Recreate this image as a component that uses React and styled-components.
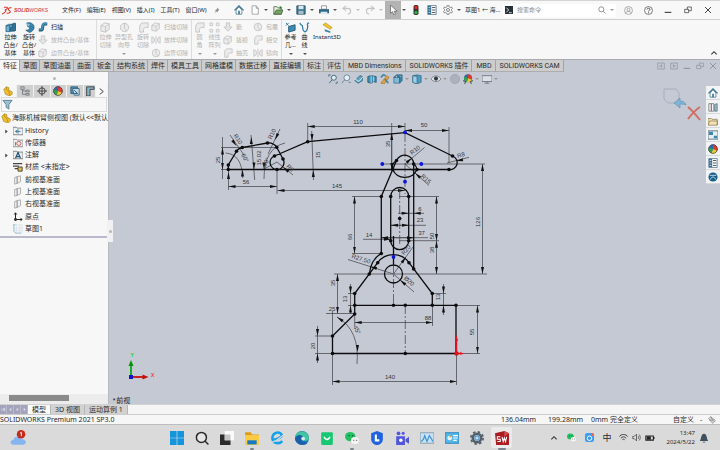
import React, { useState } from "react";
import styled, { createGlobalStyle, css } from "styled-components";

const GlobalStyle = createGlobalStyle`
  * {
    box-sizing: border-box;
  }
  body {
    margin: 0;
    font-family: "Noto Sans", "Noto Sans CJK SC", sans-serif;
    font-size: 7px;
    line-height: 10px;
    color: #2b2b2b;
    background-color: #f6f6f6;
  }
  button, input {
    font: inherit;
    color: inherit;
    border: none;
    margin: 0;
    padding: 0;
    background: none;
  }
  svg {
    display: block;
    flex: none;
  }
`;

const Page = styled.div`
  min-height: 100vh;
  display: flex;
  flex-direction: column;
`;

const TitleBar = styled.header`
  height: 20px;
  padding-right: 2px;
  display: flex;
  align-items: center;
  border-top: 1px solid #d4d4d4;
  border-bottom: 1px solid #cfcfcf;
  background-color: #f8f8f8;
`;

const Logo = styled.div`
  width: 61px;
  padding-left: 2px;
  display: flex;
  align-items: center;
  gap: 1px;
  color: #d8372d;
  font-family: "Liberation Sans", sans-serif;
  font-size: 5px;
  font-style: italic;
  & > b {
    font-weight: 900;
  }
`;

const Menus = styled.nav`
  width: 170px;
  display: flex;
  align-items: center;
  gap: 4px;
  font-size: 6px;
  white-space: nowrap;
  color: #1d1d1d;
`;

const MenuButton = styled.button`
  padding: 0 1px;
`;

const QuickTools = styled.div`
  flex: 1;
  display: flex;
  align-items: center;
`;

const QuickButton = styled.button`
  width: ${(props) => (props.$caret ? 23 : 16)}px;
  height: 18px;
  display: flex;
  align-items: center;
  gap: 1px;
  opacity: ${(props) => (props.disabled ? 0.35 : 1)};
`;

const QuickFace = styled.span`
  width: 16px;
  height: 18px;
  display: flex;
  align-items: center;
  justify-content: center;
  background-color: ${(props) => (props.$active ? "#b3b3b3" : "transparent")};
`;

const Caret = styled.span`
  width: 0;
  height: 0;
  border-left: 2px solid transparent;
  border-right: 2px solid transparent;
  border-top: 2px solid ${(props) => (props.$light ? "#999" : "#555")};
`;

const DocName = styled.div`
  width: 38px;
  font-size: 6px;
  overflow: hidden;
  white-space: nowrap;
`;

const SearchBox = styled.label`
  width: 113px;
  height: 13px;
  padding: 0 2px;
  display: flex;
  align-items: center;
  gap: 4px;
  background-color: #fff;
`;

const SearchInput = styled.input`
  flex: 1;
  min-width: 0;
  font-size: 6px;
  outline: none;
  &::placeholder {
    color: #858585;
    opacity: 1;
  }
`;

const WindowButtons = styled.div`
  display: flex;
  padding-left: 2px;
`;

const WindowButton = styled.button`
  width: 20px;
  height: 18px;
  display: flex;
  align-items: center;
  justify-content: center;
`;

const Ribbon = styled.section`
  height: 39px;
  display: flex;
  background-color: #f7f7f7;
`;

const RibbonGroup = styled.div`
  height: 39px;
  padding: 0 1px;
  display: flex;
  border-right: 1px solid ${(props) => (props.$last ? "transparent" : "#dcdcdc")};
`;

const BigTool = styled.button`
  width: ${(props) => props.$width}px;
  padding-top: 2px;
  display: flex;
  flex-direction: column;
  align-items: center;
  font-size: 6px;
  line-height: 8px;
  white-space: nowrap;
  color: ${(props) => (props.disabled ? "#b4b4b4" : "#222")};
  & > svg {
    opacity: ${(props) => (props.disabled ? 0.4 : 1)};
  }
  & > ${Caret} {
    margin-top: 4px;
  }
`;

const SmallTools = styled.div`
  width: ${(props) => props.$width}px;
  display: flex;
  flex-direction: column;
`;

const SmallTool = styled.button`
  height: 13px;
  display: flex;
  align-items: center;
  gap: 3px;
  font-size: 6px;
  white-space: nowrap;
  color: ${(props) => (props.disabled ? "#b4b4b4" : "#222")};
  & > svg {
    opacity: ${(props) => (props.disabled ? 0.4 : 1)};
  }
`;

const RibbonEnd = styled.div`
  flex: 1;
  display: flex;
  justify-content: flex-end;
  align-items: flex-end;
  padding: 0 2px 2px 0;
`;

const TabRow = styled.div`
  height: 13px;
  padding-right: 1px;
  display: flex;
  border-top: 1px solid #a9abb0;
  background-color: #c5c9d4;
`;

const CommandTab = styled.button`
  height: 12px;
  padding: ${(props) => (props.$wide ? "0 3px 0 4px" : "0 2px 0 3px")};
  font-family: Roboto, "Noto Sans CJK SC", sans-serif;
  line-height: 12px;
  white-space: nowrap;
  border-right: 1px solid #a4a4a4;
  border-bottom: 1px solid ${(props) => (props.$active ? "#f7f7f7" : "#adadad")};
  background-color: ${(props) => (props.$active ? "#f7f7f7" : "#cdcdcd")};
`;

const DocButtons = styled.div`
  margin-left: auto;
  display: flex;
  align-items: center;
  color: #8b8f99;
`;

const DocButton = styled.button`
  width: 13px;
  display: flex;
  justify-content: center;
`;

const Body = styled.main`
  flex: 1;
  display: flex;
`;

const SidePanel = styled.aside`
  width: 109px;
  display: flex;
  flex-direction: column;
  position: relative;
  z-index: 1;
  border-right: 1px solid #b9bac0;
  background-color: #f7f7f7;
`;

const Grip = styled.div`
  height: 13px;
  display: flex;
  align-items: center;
  justify-content: center;
`;

const GripDot = styled.span`
  width: 3px;
  height: 3px;
  border-radius: 50%;
  background-color: #b8b8b8;
`;

const PanelTabs = styled.div`
  height: 12px;
  display: flex;
`;

const PanelTab = styled.button`
  width: ${(props) => (props.$narrow ? 12 : 17)}px;
  display: flex;
  align-items: center;
  justify-content: center;
  overflow: hidden;
  border-right: 1px solid #f1f1f1;
  background-color: ${(props) => (props.$active ? "#f7f7f7" : "#cfcfcf")};
`;

const FilterRow = styled.label`
  height: 15px;
  margin: 0 1px;
  display: flex;
  align-items: center;
  gap: 2px;
  border: 1px solid #dadada;
`;

const FilterInput = styled.input`
  flex: 1;
  min-width: 0;
  outline: none;
`;

const Tree = styled.div`
  padding-bottom: 1px;
  display: flex;
  flex-direction: column;
  gap: 1px;
  border-bottom: 2px solid #b9b8cd;
`;

const TreeRoot = styled.div`
  height: 12px;
  padding-left: 1px;
  display: flex;
  align-items: center;
  gap: 1px;
  white-space: nowrap;
`;

const TreeList = styled.ul`
  margin: 0;
  padding: 0;
  list-style: none;
`;

const TreeItem = styled.li`
  height: 12px;
  display: flex;
  align-items: center;
  white-space: nowrap;
  & > svg {
    margin-right: 2px;
  }
`;

const Expander = styled.button`
  width: 13px;
  height: 12px;
  display: flex;
  align-items: center;
  justify-content: center;
`;

const PanelFill = styled.div`
  flex: 1;
`;

const ScrollTrack = styled.div`
  height: 10px;
  padding: 1px 9px;
  background-color: #ececec;
`;

const ScrollThumb = styled.div`
  width: 60px;
  height: 6px;
  background-color: #8a8a8a;
`;

/* tab that sticks out of the panel edge */
const CollapseHandle = styled.button`
  position: absolute;
  top: 148px;
  left: 107px;
  width: 6px;
  height: 22px;
  display: flex;
  align-items: center;
  justify-content: center;
  background-color: #f1f1f3;
`;

const Viewport = styled.div`
  flex: 1;
  position: relative;
  background-color: #c5c9d4;
`;

const Drawing = styled.svg`
  width: 100%;
  height: 100%;
`;

const HudBar = styled.div`
  position: absolute;
  top: 1px;
  left: 0;
  right: 0;
  display: flex;
  align-items: center;
  justify-content: center;
`;

const HudButton = styled.button`
  width: ${(props) => (props.$caret ? 19 : 13)}px;
  height: 12px;
  display: flex;
  align-items: center;
  gap: 2px;
`;

const ConfirmCorner = styled.button`
  position: absolute;
  top: 13px;
  right: 18px;
`;

const TaskPane = styled.div`
  position: absolute;
  top: 14px;
  right: 0;
  width: 14px;
  display: flex;
  flex-direction: column;
  background-color: #f2f3f5;
`;

const PaneButton = styled.button`
  height: 14px;
  display: flex;
  align-items: center;
  justify-content: center;
  border-bottom: 1px solid #d7d8dc;
`;

const ModelTabs = styled.div`
  height: 10px;
  display: flex;
  border-top: 1px solid #d2d2d2;
  background-color: #f5f5f5;
`;

const Arrows = styled.div`
  width: 28px;
  display: flex;
  background-color: #a3a3bb;
`;

const ArrowButton = styled.button`
  width: 7px;
  display: flex;
  align-items: center;
  justify-content: center;
  border-right: 1px solid #b7b7c9;
`;

const ModelTab = styled.button`
  padding: 0 4px;
  line-height: 9px;
  white-space: nowrap;
  border-right: 1px solid #b5b5b5;
  background-color: ${(props) => (props.$active ? "#fafafa" : "#d2d2d2")};
`;

const StatusBar = styled.footer`
  height: 10px;
  display: flex;
  border-top: 1px solid #cccccc;
  background-color: #f6f6f6;
  white-space: nowrap;
`;

const Product = styled.span`
  flex: 1;
`;

const StatusCell = styled.span`
  width: ${(props) => props.$width}px;
  display: flex;
  align-items: center;
  gap: 6px;
`;

const Taskbar = styled.footer`
  height: 26px;
  display: grid;
  grid-template-columns: 4fr 350px 5fr;
  align-items: center;
  border-top: 1px solid #bdbdbd;
  background-color: #dadada;
`;

const Weather = styled.button`
  width: 36px;
  height: 24px;
  display: flex;
  align-items: center;
  justify-content: center;
`;

const Apps = styled.div`
  display: flex;
`;

const AppButton = styled.button`
  width: 25px;
  height: 24px;
  position: relative;
  display: flex;
  align-items: center;
  justify-content: center;
  ${(props) =>
    props.$open &&
    css`
      &::after {
        content: "";
        position: absolute;
        bottom: 0;
        left: 50%;
        width: ${props.$current ? 8 : 4}px;
        height: 2px;
        border-radius: 1px;
        background-color: #7c848e;
        transform: translateX(-50%);
      }
    `}
`;

const AppFace = styled.span`
  width: 21px;
  height: 21px;
  display: flex;
  align-items: center;
  justify-content: center;
  border-radius: 2px;
  background-color: ${(props) => (props.$current ? "#ebebeb" : "transparent")};
`;

const Tray = styled.div`
  padding-right: 8px;
  display: flex;
  align-items: center;
  justify-content: flex-end;
`;

const TrayButton = styled.button`
  width: ${(props) => props.$width}px;
  display: flex;
  align-items: center;
  justify-content: center;
  font-size: 9px;
`;

const Clock = styled.div`
  width: 38px;
  text-align: right;
  font-size: 6px;
  line-height: 9px;
`;

const blue = "#3683ad";

const glyphs = {
  ds: (
    <g fill="none" stroke="#d8372d" strokeWidth="1.1">
      <path d="M2 2.500h3.500c1.500 1-1 2.500-2.500 3 2 0 2 2-3 4.500M10.500 3c-4-.5-4.500 2-2.500 3s1 3.500-3 3" />
    </g>
  ),
  pin: (
    <path d="M7 1l4 4-1.500.5-1.500 2 0 2-2-2L2 11l3-4-2-2h2l2-2z" fill="#8a8f95" />
  ),
  home: (
    <g>
      <path d="M2.500 6v5h7V6L6 2.500z" fill="#fff" stroke="#4b7c94" />
      <path d="M.5 6.500L6 1l5.500 5.500" fill="none" stroke="#3c7794" strokeWidth="1.500" />
      <path d="M5 7h2v4H5z" fill="#3c7794" />
    </g>
  ),
  doc: <path d="M2.500 1h5l2.500 3v7h-7.500zM7.500 1v3H10" fill="#fff" stroke="#999" />,
  open: (
    <g>
      <path d="M1 2h4l1 1.500h4V11H1z" fill="#e6edda" stroke="#5b6d55" />
      <path d="M1 11l3-5h8l-2 5z" fill="#75a36a" stroke="#49663f" />
      <path d="M8 1l3 2-3 2z" fill="#2b8b30" />
    </g>
  ),
  save: (
    <g>
      <path d="M1 1h10v10H1z" fill="#3b7898" stroke="#2a4a5e" />
      <path d="M3 1h6v4H3z" fill="#d8e6ee" />
      <path d="M3 7h6v4H3z" fill="#a9bcc8" />
    </g>
  ),
  print: (
    <g>
      <path d="M3 1h6v4H3z" fill="#fff" stroke="#888" />
      <path d="M0 5h12v5H0z" fill="#2e6484" />
      <path d="M2 8h8v3H2z" fill="#dce9f0" />
    </g>
  ),
  undo: <path d="M5 1L1 4l4 3M1 4h6c4 0 5 6 0 7" fill="none" stroke="#666" strokeWidth="1.300" />,
  redo: <path d="M7 1l4 3-4 3M11 4H5C1 4 0 10 5 11" fill="none" stroke="#666" strokeWidth="1.300" />,
  cursor: <path d="M3 0v10l2.500-2L7 12l2-1-1.500-3.500H11z" fill="#fafafa" stroke="#555" strokeWidth=".8" />,
  traffic: (
    <g>
      <rect x="3" y="0" width="6" height="12" rx="2" fill="#333" />
      <circle cx="6" cy="3" r="2" fill="#e02b20" />
      <circle cx="6" cy="9" r="2" fill="#2fae3c" />
    </g>
  ),
  props: (
    <g>
      <path d="M1 .5h10v11H1z" fill="#f5f8fa" stroke="#5d7d90" />
      <path d="M1 1h4v10H1z" fill="#3c7390" />
      <path d="M2 3h2M2 6h2M2 9h2" stroke="#cfe2ec" />
      <path d="M6 3h4M6 6h4M6 9h4" stroke="#444" />
    </g>
  ),
  gear: (
    <g fill="none" stroke="#6d7278">
      <circle cx="6" cy="6" r="1.800" />
      <path d="M5 .7h2l.4 1.500 1.400.8 1.500-.6 1 1.700L10.200 5.300v1.400l1.100 1.200-1 1.700-1.500-.5-1.400.8-.4 1.400H5l-.4-1.400-1.400-.8-1.500.5-1-1.700 1.100-1.200V5.300L.7 4.100l1-1.700 1.500.6 1.400-.8z" />
    </g>
  ),
  console: (
    <g>
      <path d="M0 0h12v12H0z" fill="#263038" />
      <path d="M2 2.500L5.500 6 2 9.500M6 10h4" fill="none" stroke="#fff" strokeWidth="1.200" />
    </g>
  ),
  search: (
    <g fill="none" stroke="#777" strokeWidth="1.200">
      <circle cx="5" cy="5" r="3.800" />
      <path d="M8 8l3.500 3.500" />
    </g>
  ),
  user: (
    <g fill="none" stroke="#8c8c8c" strokeWidth=".9">
      <circle cx="6" cy="6" r="5.300" />
      <circle cx="6" cy="5" r="2" />
      <path d="M2.500 9.500c1-3 6-3 7 0" />
    </g>
  ),
  help: (
    <g fill="none" stroke="#555" strokeWidth="1">
      <circle cx="6" cy="6" r="5.300" />
      <path d="M4 4.600C4 2.500 8 2.500 8 4.600 8 6 6 5.700 6 7.300M6 8.300v1.400" strokeWidth="1.300" />
    </g>
  ),
  min: <path d="M1 9.500h10" stroke="currentColor" strokeWidth="1.500" />,
  restore: <path d="M1 5h6v5H1zM5 5V1.500h6V7H7" fill="none" stroke="currentColor" />,
  close: <path d="M1.500 1.500l9 9M10.500 1.500l-9 9" stroke="currentColor" strokeWidth="1.300" />,
  paneLeft: <path d="M1 1.500h10v9H1zM7 4L4 6l3 2z" fill="none" stroke="currentColor" />,
  paneRight: <path d="M1 1.500h10v9H1zM5 4l3 2-3 2z" fill="none" stroke="currentColor" />,
  up: <path d="M2 8l4-4 4 4" fill="none" stroke="#333" strokeWidth="1.600" />,
  right: <path d="M3 1l6 5-6 5" fill="none" stroke="#333" strokeWidth="1.600" />,
  branch: <path d="M3 1l6 5-6 5z" fill="#444" />,
  extrude: (
    <g stroke="#1c4f6e" strokeWidth=".7">
      <path d="M1 4l3-1.500h4V9L5 10.500H1z" fill="#6fb1cf" />
      <path d="M1 4h4v6.500M5 4l3-1.500" fill="none" />
      <path d="M6 6h2V2l3-1 1 1v7l-2 1H6z" fill="#2b7399" />
    </g>
  ),
  revolve: (
    <g>
      <path d="M3 1c9-2 11 8 3 10.500L2 9c5 0 5-3.500 2-4z" fill={blue} stroke="#1f4f6c" strokeWidth=".7" />
      <path d="M3 1l4 2-3 2z" fill="#8cc7df" />
    </g>
  ),
  sweep: (
    <g fill="none">
      <path d="M1 9.500h3c3 0 0-7 4-7h3" stroke="#21536f" strokeWidth="3.600" />
      <path d="M1 9h3c3 0 0-7 4-7h3" stroke="#3f93bd" strokeWidth="2" />
    </g>
  ),
  solid: (
    <path d="M1 4l4-3 5 1v6l-4 3-5-1zM1 4l5 1 4-3M6 5v6" fill="#ddd" stroke="#777" strokeWidth="1" />
  ),
  hole: (
    <g fill="#ddd" stroke="#777">
      <circle cx="6" cy="6" r="4.500" />
      <path d="M6 1v6l3 3" fill="none" />
    </g>
  ),
  loft: <path d="M4 1h4v5h3l-5 5-5-5h3z" fill="#ccc" stroke="#777" />,
  fillet: <path d="M2 11V5c0-3 2-4 4-4h5v5H8c-1 0-2 1-2 2v3z" fill="#ddd" stroke="#777" />,
  pattern: <path d="M1 1h3v3H1zM8 1h3v3H8zM1 8h3v3H1zM8 8h3v3H8z" fill="#ddd" stroke="#888" />,
  mirror: <path d="M1 2l3 2v4l-3 2zM11 2L8 4v4l3 2zM6 1v10" fill="#ddd" stroke="#777" />,
  refgeo: (
    <g>
      <path d="M4 5l7-2v6l-7 2z" fill="#3d8bb3" stroke="#235a78" />
      <path d="M1 1l3 3M4 1L1 4" stroke="#2c6d92" />
    </g>
  ),
  curve: <path d="M1 1c1 4 3 1 3 5s3 7 5 2-2-6 2-7" fill="none" stroke="#2b7bab" strokeWidth="1.400" />,
  instant: (
    <g>
      <path d="M1 3l3-2 7 5-2 2z" fill="#f2c52f" stroke="#a98211" strokeWidth=".6" />
      <path d="M3 8l6 2v2L3 10z" fill="#3f7fa6" />
    </g>
  ),
  part: (
    <g stroke="#a37b10" strokeWidth=".7">
      <path d="M1 4l3-3 3 1v3l4 2v3l-3 2-5-2z" fill="#f1bf2d" />
      <path d="M4 1l0 3 3 2M7 6l1 5" fill="none" />
    </g>
  ),
  config: <path d="M1 1h4v3H1zM7 5h4v2H7zM7 9h4v2H7zM3 4v6h4M3 6h4" fill="none" stroke="#6f7479" />,
  target: (
    <g fill="none" stroke="#333">
      <circle cx="6" cy="6" r="3.800" />
      <path d="M6 0v12M0 6h12" />
    </g>
  ),
  ball: (
    <g>
      <circle cx="6" cy="6" r="5.300" fill="#2d66b5" />
      <path d="M6 6V.7A5.300 5.300 0 0 1 11 8z" fill="#dd3a2e" />
      <path d="M6 6l5 2a5.300 5.300 0 0 1-7 3z" fill="#f0c733" />
      <path d="M6 6L4 11A5.300 5.300 0 0 1 1 4z" fill="#37a04a" />
      <circle cx="6" cy="6" r="5.300" fill="none" stroke="#333" strokeWidth=".7" />
    </g>
  ),
  camTree: (
    <g>
      <path d="M1 1h8v8H1z" fill="#4b8db0" stroke="#2a5c78" />
      <path d="M3 3h8v8H5z" fill="#c5d9e4" stroke="#34647e" />
      <path d="M5 5l4 4M5 9h4" stroke="#1b4c68" />
    </g>
  ),
  sheet: <path d="M2 12V1h9v3H6v8z" fill="#83b4cc" stroke="#333" />,
  funnel: <path d="M1 1.500h10L7.500 6v5l-3-2V6z" fill="#9fc0d2" stroke="#567f96" />,
  history: (
    <g>
      <path d="M0 1.500h4l1 1h7v8H0z" fill="#eee" stroke="#777" />
      <path d="M3 6.500h6M6 4v5M5 5L3 6.500 5 8" stroke="#2d7398" fill="none" />
    </g>
  ),
  sensor: (
    <g>
      <path d="M0 1.500h4l1 1h7v8H0z" fill="#eee" stroke="#888" />
      <circle cx="7" cy="6.500" r="2.500" fill="none" stroke="#c05050" />
      <path d="M3 5v4" stroke="#666" />
    </g>
  ),
  note: (
    <g>
      <path d="M0 1.500h4l1 1h7v8H0z" fill="#e8eef2" stroke="#777" />
      <path d="M3 10l3-7 3 7M4 8h4" stroke="#20506d" strokeWidth="1.400" fill="none" />
    </g>
  ),
  material: (
    <g>
      <path d="M0 2h11M0 5h7M2 8h4" stroke="#444" strokeWidth="1.500" />
      <path d="M6 6h5v5H6z" fill="#e3bf49" stroke="#333" />
    </g>
  ),
  plane: <path d="M2 3l3-1v8l-3 1zM5 2l4-1v7l-4 2z" fill="#f3f3f3" stroke="#8e8e8e" strokeWidth=".8" />,
  origin: <path d="M3 1v8h8M1.500 3L3 1l1.500 2M9 7.500L11 9l-2 1.500M2 8h2v2H2z" fill="none" stroke="#222" strokeWidth="1.200" />,
  sketch: (
    <g fill="none" strokeWidth=".8">
      <path d="M4 1v10M8 1v10M1 5h10M1 8h10M3 1h8v10" stroke="#d0dfe7" />
      <path d="M0 1h3M1 1v7c0 2 2 3 4 3h5" stroke="#6ea3bf" />
    </g>
  ),
  zoomFit: (
    <g fill="none" stroke="#4a6c84" strokeWidth="1.200">
      <circle cx="7" cy="4.500" r="3" fill="#e0ecf4" />
      <path d="M5 7l-3.500 4M1 1h2M1 1v2M11 9v2H9" />
    </g>
  ),
  zoomArea: (
    <g fill="none" stroke="#66869a" strokeWidth="1.100">
      <circle cx="7" cy="4.500" r="3.500" fill="#e6f0f6" />
      <path d="M4.500 7L1 11M9 10h3" />
    </g>
  ),
  prev: (
    <g>
      <path d="M1 8l6-6 3 1v5l-5 3z" fill="#64a6c8" stroke="#2f6480" />
      <path d="M1 6l5 3 5-6" fill="none" stroke="#e8f3f8" />
    </g>
  ),
  section: (
    <g>
      <path d="M1 3l4-1 6 1v7l-3-1-3 2-4-1z" fill="#3f8eb4" stroke="#245a78" />
      <path d="M5 2v9M8 3v6" stroke="#cfe5ef" />
    </g>
  ),
  dynamic: (
    <g>
      <path d="M1 11l7-9 3 2-6 8z" fill="#e2a13a" stroke="#93611b" strokeWidth=".6" />
      <path d="M1 4l3-3 3 1M6 6l4 5" fill="none" stroke="#4284a7" strokeWidth="2" />
    </g>
  ),
  orient: (
    <g stroke="#245a78" strokeWidth=".7">
      <path d="M1 4h7v7H1z" fill="#7dbbd6" />
      <path d="M1 4l3-3h7v7l-3 3V4z" fill="#3f86aa" />
      <path d="M3 2h2v3M8 2h2v2" fill="#f2f7fa" />
    </g>
  ),
  cube: (
    <g stroke="#245a78" strokeWidth=".7">
      <path d="M1 2l5-1 5 1v8l-5 2-5-2z" fill="#4e9bc1" />
      <path d="M1 2l5 1v9l-5-2z" fill="#9fd0e4" />
    </g>
  ),
  eye: (
    <g>
      <path d="M0 6c3-5 9-5 12 0-3 4-9 4-12 0z" fill="#e4e9ed" stroke="#777" />
      <circle cx="6" cy="5.500" r="2.500" fill="#2f3b45" />
    </g>
  ),
  sphere: <circle cx="6" cy="6" r="5.500" fill="#acb2bd" stroke="#9da4b0" />,
  scene: (
    <g>
      <circle cx="6" cy="5" r="4.800" fill="#2d66b5" />
      <path d="M6 5V.2A4.800 4.800 0 0 1 10.500 7z" fill="#dd3a2e" />
      <path d="M6 5l4.500 2a4.800 4.800 0 0 1-6 2.500z" fill="#f0c733" />
      <path d="M6 5L4.500 9.500A4.800 4.800 0 0 1 1.500 3z" fill="#37a04a" />
      <path d="M0 8l3 1-1 3M12 8l-3 1 1 3" fill="none" stroke="#333" />
    </g>
  ),
  screen: <path d="M0 2h12v7H0zM3 11h6M6 9v2" fill="#dce0e5" stroke="#66707a" />,
  books: (
    <g>
      <path d="M1 2h3v9H1zM4 2h3v9H4z" fill="#f5f5f5" stroke="#777" />
      <path d="M8 3l3-1v9H8z" fill="#9fb8c8" stroke="#5f7a8a" />
    </g>
  ),
  folder: <path d="M0 3h4l1 1h6v7H0zM0 11l2-5h10l-1 5" fill="#f1e3b7" stroke="#97835a" />,
  palette: (
    <g>
      <path d="M0 1h12v10H0z" fill="#e8eef2" stroke="#526a7a" />
      <path d="M1 2h5v4H1zM7 7h4v3H7z" fill="#3e85aa" />
    </g>
  ),
  forum: (
    <g>
      <circle cx="6" cy="6" r="5.500" fill="#195f8c" />
      <path d="M2 4h8M3 9c1-4 5-4 6 0" stroke="#d8ecf6" fill="none" />
    </g>
  ),
  tag: <path d="M1 4l3-3 7 6-4 4zM4 1l4 7M2 6l6 0" fill="#ddd" stroke="#777" />,
  start: (
    <path d="M0 0h5.700v5.700H0zM6.300 0H12v5.700H6.300zM0 6.300h5.700V12H0zM6.300 6.300H12V12H6.300z" fill="#1295dd" />
  ),
  find: (
    <g fill="none" stroke="#2b2b2b" strokeWidth="1.300">
      <circle cx="5.500" cy="5.500" r="4.300" fill="#e6e6e6" />
      <path d="M8.500 8.500l3 3" />
    </g>
  ),
  desk: (
    <g>
      <path d="M4 0h8v8H4z" fill="#fbfbfb" />
      <path d="M0 3h4v5h5v4H0z" fill="#2b2b2b" />
      <path d="M4 3h5v5H4z" fill="#c4c4c4" />
    </g>
  ),
  explorer: (
    <g>
      <path d="M0 1h5l1 2h6v9H0z" fill="#dc9d17" />
      <path d="M0 3.500h12V12H0z" fill="#fccb46" />
      <path d="M2 8h8v3.500H2z" fill="#1478c5" />
    </g>
  ),
  ebrowser: (
    <g fill="none">
      <path d="M10.500 4C8.500 0 2.500.5 2 6c0 5 6.500 5.500 8.500 2.500" stroke="#14a3ea" strokeWidth="2.200" />
      <path d="M2 7.500c3 0 6-1 8.500-3.500" stroke="#14a3ea" strokeWidth="2.200" />
      <path d="M0 9.500C5 10 8 6 12 3" stroke="#dadada" strokeWidth="1" />
    </g>
  ),
  edge: (
    <g>
      <circle cx="6" cy="6" r="6" fill="#1a74bd" />
      <path d="M0 6C0-1 11-2 12 6c0 3-4 3-5 2 1-3-2-5-7-2z" fill="#3ec7a0" />
      <path d="M0 6c2-4 7-3 7 0-3 1-2 4 4 4-4 4-11 1-11-4z" fill="#1b5fa9" />
      <circle cx="7" cy="6.500" r="1.600" fill="#dcecf4" />
    </g>
  ),
  store: (
    <g>
      <rect x="1" y="1" width="10" height="11" rx="1" fill="#17c873" />
      <path d="M3.500 5c1 3 4 3 5 0" fill="none" stroke="#fff" strokeWidth="1.200" />
    </g>
  ),
  wechat: (
    <g>
      <ellipse cx="4.500" cy="4.800" rx="4.500" ry="4" fill="#23c161" />
      <ellipse cx="8.500" cy="8.200" rx="3.500" ry="3" fill="#f6f6f6" />
      <path d="M3 4h1M6 4h1" stroke="#17532f" />
      <path d="M7 8h1M9.500 8h1" stroke="#777" />
    </g>
  ),
  lenovo: (
    <g>
      <path d="M1 2l5-2 5 2v5c0 3-3 5-5 5S1 10 1 7z" fill="#1e63dd" />
      <path d="M5 3v5h3" fill="none" stroke="#fff" strokeWidth="1.800" />
    </g>
  ),
  meeting: (
    <g fill="#5156df">
      <circle cx="3" cy="2" r="1.600" />
      <circle cx="7" cy="2" r="1.300" />
      <path d="M1 4.500h7.500V12H1zM9 7l3-2v6L9 9z" />
      <circle cx="5" cy="8" r="1.500" fill="#fff" />
    </g>
  ),
  monitor: (
    <g>
      <path d="M0 1.500h12v9H0z" fill="#c7e2f4" stroke="#8aa0b0" />
      <path d="M1 9l2-2 1-3 2 5 2-5 2 3 1 2" fill="none" stroke="#3f92d0" />
    </g>
  ),
  control: (
    <g>
      <path d="M0 1.500h12v9H0z" fill="#55b6ea" stroke="#2b86ba" />
      <circle cx="4" cy="6" r="2" fill="#eaf5fb" />
      <path d="M7 4h4M7 6h4M7 8h3" stroke="#fff" />
      <path d="M4 6V4h2z" fill="#e7922b" />
    </g>
  ),
  settings: (
    <g fill="none">
      <circle cx="6" cy="6" r="3.600" stroke="#55606b" strokeWidth="2.200" />
      <circle cx="6" cy="6" r="5.300" stroke="#55606b" strokeWidth="1.400" strokeDasharray="2.100 2.060" />
      <circle cx="6" cy="6" r="1.800" stroke="#4d9ad8" strokeWidth="1" />
    </g>
  ),
  sw: (
    <g>
      <path d="M0 2l8-2 4 2v10H1z" fill="#a81c22" />
      <path d="M8 0v5l4-3" fill="#d24c4c" />
      <path d="M4.500 5H2v2h2.500v2H2M6 5l1 4 1-3 1 3 1-4" fill="none" stroke="#fff" strokeWidth=".9" />
    </g>
  ),
  cloud: (
    <g>
      <path d="M2.500 11C-.5 11 0 7.500 2.500 7.500 3 4 8 4 8.500 7c4-.5 4.500 4 1 4z" fill="#85b5ef" />
      <circle cx="8.300" cy="3.200" r="3.200" fill="#c42b1c" />
      <path d="M7.600 2.400l.9-.7v3" fill="none" stroke="#fff" strokeWidth=".7" />
    </g>
  ),
  qq: (
    <g>
      <rect x="0" y="0" width="12" height="12" rx="3" fill="#3b9df0" />
      <circle cx="6" cy="7" r="3" fill="none" stroke="#fff" strokeWidth="1.300" />
      <circle cx="10" cy="2" r="2" fill="#f0635a" />
    </g>
  ),
  wifi: (
    <g fill="none" stroke="#333" strokeWidth="1.200">
      <path d="M0 5c3-4 9-4 12 0M2.500 7c2-2.500 5-2.500 7 0M4.500 9c1-1 2-1 3 0" />
    </g>
  ),
  sound: <path d="M1 4.500h2l3-3v9l-3-3H1zM8 4c1 1 1 3 0 4M9.500 2c2 2 2 6 0 8" fill="none" stroke="#444" />,
  battery: (
    <g>
      <path d="M1 3.500h9v5H1zM11 5v2" fill="none" stroke="#222" strokeWidth="1.300" />
      <path d="M2 4h5v4H2z" fill="#222" />
    </g>
  ),
  bell: <path d="M1 9.500c2-2 1-8 5-8.500 4 .5 3 6.500 5 8.500zM4.500 10.500h3v1h-3z" fill="#3f4f60" />,
  first: <path d="M2 2v8M9 2L4 6l5 4z" fill="#dcdce8" stroke="#dcdce8" />,
  back: <path d="M8 2L3 6l5 4z" fill="#dcdce8" />,
  next: <path d="M4 2l5 4-5 4z" fill="#dcdce8" />,
};

const Icon = ({ name, size = 10 }) => (
  <svg width={size} height={size} viewBox="0 0 12 12" aria-hidden="true">
    {glyphs[name]}
  </svg>
);

const menus = ["文件(F)", "编辑(E)", "视图(V)", "插入(I)", "工具(T)", "窗口(W)"];

const quickTools = [
  { icon: "home", label: "主页" },
  { icon: "doc", label: "新建", caret: true },
  { icon: "open", label: "打开", caret: true },
  { icon: "save", label: "保存", caret: true },
  { icon: "print", label: "打印", caret: true },
  { icon: "undo", label: "撤消", caret: true, disabled: true },
  { icon: "redo", label: "重做", caret: true, disabled: true },
  { icon: "cursor", label: "选择", caret: true, active: true },
  { icon: "traffic", label: "重建模型" },
  { icon: "props", label: "文件属性" },
  { icon: "gear", label: "选项", caret: true },
];

const ribbon = [
  {
    big: [
      { icon: "extrude", lines: ["拉伸", "凸台/", "基体"], width: 19 },
      { icon: "revolve", lines: ["旋转", "凸台/", "基体"], width: 18 },
    ],
    small: [
      {
        width: 57,
        tools: [
          { icon: "sweep", text: "扫描" },
          { icon: "loft", text: "放样凸台/基体", disabled: true },
          { icon: "solid", text: "边界凸台/基体", disabled: true },
        ],
      },
    ],
  },
  {
    big: [
      { icon: "solid", lines: ["拉伸", "切除"], width: 15, disabled: true },
      { icon: "hole", lines: ["异型孔", "向导"], width: 22, caret: true, disabled: true },
      { icon: "fillet", lines: ["旋转", "切除"], width: 16, disabled: true },
    ],
    small: [
      {
        width: 39,
        tools: [
          { icon: "solid", text: "扫描切除", disabled: true },
          { icon: "mirror", text: "放样切除", disabled: true },
          { icon: "hole", text: "边界切除", disabled: true },
        ],
      },
    ],
  },
  {
    big: [
      { icon: "fillet", lines: ["圆", "角"], width: 13, caret: true, disabled: true },
      { icon: "pattern", lines: ["线性", "阵列"], width: 17, caret: true, disabled: true },
    ],
    small: [
      {
        width: 30,
        tools: [
          { icon: "loft", text: "筋", disabled: true },
          { icon: "solid", text: "拔模", disabled: true },
          { icon: "fillet", text: "抽壳", disabled: true },
        ],
      },
      {
        width: 27,
        tools: [
          { icon: "hole", text: "包覆", disabled: true },
          { icon: "fillet", text: "相交", disabled: true },
          { icon: "mirror", text: "镜向", disabled: true },
        ],
      },
    ],
  },
  {
    big: [
      { icon: "refgeo", lines: ["参考", "几..."], width: 15, caret: true },
      { icon: "curve", lines: ["曲", "线"], width: 13, caret: true },
      { icon: "instant", lines: ["Instant3D"], width: 32 },
    ],
    small: [],
  },
];

const commandTabs = [
  "特征", "草图", "草图油墨", "曲面", "钣金", "结构系统", "焊件", "模具工具",
  "网格建模", "数据迁移", "直接编辑", "标注", "评估", "MBD Dimensions",
  "SOLIDWORKS 插件", "MBD", "SOLIDWORKS CAM",
];

const treeGroups = [
  [
    { icon: "history", text: "History", open: true },
    { icon: "sensor", text: "传感器" },
    { icon: "note", text: "注解", open: true },
    { icon: "material", text: "材质 <未指定>" },
  ],
  [
    { icon: "plane", text: "前视基准面" },
    { icon: "plane", text: "上视基准面" },
    { icon: "plane", text: "右视基准面" },
  ],
  [
    { icon: "origin", text: "原点" },
    { icon: "sketch", text: "草图1" },
  ],
];

const hudTools = [
  { icon: "zoomFit", label: "整屏显示全图" },
  { icon: "zoomArea", label: "局部放大" },
  { icon: "prev", label: "上一视图" },
  { icon: "section", label: "剖面视图" },
  { icon: "dynamic", label: "动态注解视图" },
  { icon: "orient", label: "视图定向", caret: true },
  { icon: "cube", label: "显示样式", caret: true },
  { icon: "eye", label: "隐藏/显示项目", caret: true },
  { icon: "sphere", label: "编辑外观" },
  { icon: "scene", label: "应用布景", caret: true },
  { icon: "screen", label: "视图设定", caret: true },
];

const paneTools = [
  { icon: "home", label: "资源" },
  { icon: "books", label: "设计库" },
  { icon: "folder", label: "文件探索器" },
  { icon: "palette", label: "视图调色板" },
  { icon: "ball", label: "外观" },
  { icon: "props", label: "自定义属性" },
  { icon: "forum", label: "论坛" },
];

const apps = [
  { icon: "start", label: "开始" },
  { icon: "find", label: "搜索" },
  { icon: "desk", label: "任务视图" },
  { icon: "explorer", label: "资源管理器", open: true },
  { icon: "ebrowser", label: "浏览器" },
  { icon: "edge", label: "Edge" },
  { icon: "store", label: "应用商店" },
  { icon: "wechat", label: "微信", open: true },
  { icon: "lenovo", label: "电脑管家" },
  { icon: "meeting", label: "会议" },
  { icon: "monitor", label: "监视器" },
  { icon: "control", label: "控制面板" },
  { icon: "settings", label: "设置" },
  { icon: "sw", label: "SOLIDWORKS", open: true, current: true },
];

// x1 y1 x2 y2 of the thin extension and leader lines
const thinLines = [
  [221, 147.5, 277, 147.5], [221, 169.500, 228, 169.500], [228.500, 169, 228.500, 190],
  [277, 169, 277, 194], [307.700, 123, 307.700, 142], [405, 123, 405, 133],
  [391.700, 123, 391.700, 169], [449, 127, 449, 163], [382, 164, 485, 164],
  [262, 170, 277, 162], [277, 162, 293, 175], [405, 164, 424.500, 147.500],
  [405, 164, 429, 185.500], [447, 163, 469, 157.300], [352, 196.500, 381, 196.500],
  [399, 196.500, 439, 196.500], [352, 253.500, 381, 253.500], [399, 240.700, 439, 240.700],
  [334, 274, 487, 274], [348, 259.500, 393.500, 274], [393.500, 274, 413, 247],
  [393.500, 274, 414, 292], [348, 293.500, 355, 293.500], [348, 305.500, 355, 305.500],
  [432, 293.500, 446, 293.500], [432, 305.500, 480, 305.500], [456, 353.500, 480, 353.500],
  [326, 313.500, 355, 313.500], [332.500, 311, 332.500, 336], [354.700, 314, 354.700, 326],
  [432.500, 305, 432.500, 326], [315, 336, 333, 336], [315, 353.500, 333, 353.500],
  [332.500, 353, 332.500, 385], [456.500, 353, 456.500, 385], [222.500, 137, 222.500, 179],
  [363, 239.300, 391, 239.300], [391, 225.300, 426, 225.300], [381, 237.700, 428, 237.700],
  [398, 213.300, 424, 213.300], [350.500, 284, 350.500, 314], [443.500, 284, 443.500, 315],
  [317.500, 326, 317.500, 363], [251, 135, 254.700, 180], [311.700, 131, 313.500, 180],
  [230, 135, 244, 155], [280, 129, 268, 154],
];

// lines with an arrowhead at both ends
const dimLines = [
  [222.500, 147.500, 222.500, 169.500], [228.500, 186.500, 277, 186.500],
  [277.500, 190.500, 405, 190.500], [307.700, 126.500, 405, 126.500],
  [405, 130.500, 449, 130.500], [391.700, 133, 391.700, 169.500],
  [482.500, 164, 482.500, 274], [354.500, 196.500, 354.500, 253.500],
  [436.500, 196.500, 436.500, 240.700], [436.500, 240.700, 436.500, 274],
  [337.500, 274, 337.500, 313.500], [354.700, 322.500, 432.500, 322.500],
  [477.500, 305.500, 477.500, 353.500], [332.500, 381.500, 456.500, 381.500],
  [391, 225.300, 408.700, 225.300], [381.300, 237.700, 413.700, 237.700],
];

// tip x, tip y, direction in degrees
const arrowHeads = [
  [251.300, 137, 270], [254, 169.500, 90], [312, 141, 90], [313.300, 170, 270],
  [350.500, 293.500, 90], [350.500, 305.500, 270], [443.500, 293.500, 90],
  [443.500, 305.500, 270], [317.500, 336, 90], [317.500, 353.500, 270],
  [236.500, 146, 55], [275, 140, 115], [412, 158, 320], [415, 173, 222],
  [456, 161, 170], [370, 266.500, 197], [406, 257, 306], [400, 280, 220],
  [408.700, 213.300, 0], [413.700, 213.300, 180], [391, 239.300, 0],
  [283, 167, 220], [337, 317, 215], [357.500, 352, 90], [264, 169.500, 90], [242.500, 169.500, 270],
  [228.500, 172, 270],
];

const points = [
  [228.300, 169.500], [228.300, 165], [236.500, 151.300], [242.300, 147.500],
  [267.500, 143], [276.700, 147.300], [283, 159], [274.500, 156], [277, 169.500],
  [307.700, 141.700], [452.500, 156], [449, 169.500], [396.500, 160.500],
  [413.700, 164], [392.700, 169.500], [417, 169.500], [381.300, 196.500],
  [390.700, 196.500], [408.700, 196.500], [390.700, 240.700], [408.700, 240.700],
  [381.300, 253.500], [377.700, 262.700], [409, 262.700], [413.700, 269],
  [369.300, 274], [354.700, 293.500], [354.700, 305.300], [432.300, 293.500],
  [432.300, 305.300], [456, 305.300], [393.500, 305.300], [405.300, 305.300],
  [405.300, 353.500], [332.500, 353.500], [332.500, 336], [354.700, 314],
  [399.700, 218.500],
];

const bluePoints = [[405, 132.300], [382.300, 164], [421.300, 164], [405, 181.700], [393.500, 257]];

const dimTexts = [
  ["110", 358, 121.500], ["50", 424, 125], ["35", 387.500, 144, -90], ["R10", 415, 150, -40],
  ["R15", 426, 179, 42], ["R8", 461, 155, -15], ["145", 337, 185.500], ["56", 246, 182],
  ["25", 218, 160, -90], ["15.02", 259, 158, -90], ["R10", 238, 139, 55],
  ["60°", 245, 158, 60], ["R10", 272, 134, -65], ["R8", 290, 168, 45], ["60°", 266, 162, -60],
  ["15", 318, 155, -90], ["6", 420, 208.500], ["23", 420, 220], ["37", 421.500, 232.500],
  ["14", 369, 235], ["66", 350, 237, -90], ["50", 431.500, 236, -90], ["38", 431.500, 250, -90],
  ["126", 478, 222, -90], ["R27.50", 361, 259, 17], ["R20", 406, 250, -52],
  ["Ø20", 409, 281, 42], ["13", 345, 299, -90], ["13", 438, 297, -90], ["35", 332.500, 283, -90],
  ["25", 332, 308.500], ["88", 428, 318], ["55", 472, 332, -90], ["20", 313, 346, -90],
  ["45°", 357, 330, 60], ["140", 390, 376.500],
];

const Sketch = () => (
  <Drawing viewBox="109 72 611 332" role="img" aria-label="草图1">
    <defs>
      <marker
        id="tip"
        markerUnits="userSpaceOnUse"
        markerWidth="8"
        markerHeight="4"
        refX="7"
        refY="2"
        orient="auto-start-reverse"
      >
        <path d="M7 2L0 .5v3z" fill="#111" />
      </marker>
    </defs>

    <g stroke="#3c3e44" strokeWidth=".7" fill="none">
      {thinLines.map(([x1, y1, x2, y2], i) => (
        <line key={i} x1={x1} y1={y1} x2={x2} y2={y2} />
      ))}
      {dimLines.map(([x1, y1, x2, y2], i) => (
        <line
          key={i}
          x1={x1}
          y1={y1}
          x2={x2}
          y2={y2}
          markerStart="url(#tip)"
          markerEnd="url(#tip)"
        />
      ))}
      <path d="M225.500 153Q242 154 242.700 178" />
      <path d="M285 143Q264 148 264 179" />
      <path d="M337 317Q360 330 357 364" />
      <path
        d="M405 133V194M399.700 190V245M405.300 305V353M393.500 264V305"
        strokeDasharray="9 2 2 2"
      />
    </g>

    {arrowHeads.map(([x, y, r], i) => (
      <path key={i} d="M0 0L-7-1.500v3z" fill="#111" transform={`translate(${x} ${y}) rotate(${r})`} />
    ))}

    <g stroke="#0c0c0e" strokeWidth="1.300" fill="none">
      <path d="M228.300 169.500V165L236.500 151.300Q238 148.500 242.300 147.500L267.500 143Q273.500 142.500 276.700 147.300L283 159A7 7 0 0 1 277 169.500A7 7 0 0 1 274.500 156L307.700 141.700L405 132.700L452.500 156A7 7 0 0 1 449 169.500H228.300" />
      <path d="M381.300 253.500V196.500L396.500 160.500A9 9 0 0 1 413.700 164V269" />
      <path d="M396.500 160.500Q391 164 392.700 169.500A13.300 13.300 0 0 0 417 169.500Q416.500 166 413.700 164" />
      <path d="M390.700 196.500A9 9 0 0 1 408.700 196.500V240.700A9 9 0 0 1 390.700 240.700Z" />
      <path d="M381.300 253.500Q371 259 369.300 274" />
      <path d="M354.700 305.300V293.500L377.700 262.700A19.300 19.300 0 0 1 409 262.700L432.300 293.500V305.300" />
      <circle cx="393.500" cy="274" r="9" />
      <path d="M354.700 305.300H456V353.500H332.500V336L354.700 314V305.300" />
      <path d="M393.500 236V264" />
    </g>

    {points.map(([x, y], i) => (
      <circle key={i} cx={x} cy={y} r="1.800" fill="#0c0c0e" />
    ))}
    {bluePoints.map(([x, y], i) => (
      <circle key={i} cx={x} cy={y} r="1.900" fill="#0a12e6" />
    ))}

    <g
      fontFamily="'Liberation Sans Narrow', 'Liberation Sans', sans-serif"
      fontSize="6"
      fill="#33353b"
      textAnchor="middle"
    >
      {dimTexts.map(([text, x, y, r = 0], i) => (
        <text key={i} transform={`translate(${x} ${y}) rotate(${r})`} dy="2">
          {text}
        </text>
      ))}
    </g>

    <g fill="#e2131b" stroke="#e2131b">
      <path d="M456.500 353.500V340M456.500 353.500H461" strokeWidth="1.400" />
      <path d="M456.500 335l1.500 6h-3zM465 353.500l-5 1.300v-2.600z" stroke="none" />
      <path d="M455 352h3v3h-3z" />
    </g>

    <path d="M131 377V364" stroke="#08a811" strokeWidth="1.800" />
    <path d="M131 360l2.500 6h-5z" fill="#08930f" />
    <path d="M131 377H143" stroke="#c60f10" strokeWidth="1.800" />
    <path d="M148.500 377l-6 2.500v-5z" fill="#c60f10" />
    <path d="M129 375h4v4h-4z" fill="#1212c8" />
    <g fontFamily="'Liberation Sans', sans-serif" fontSize="5" fontWeight="bold">
      <text x="130.500" y="357" fill="#17d51f">Y</text>
      <text x="151" y="377" fill="#f03a3a">X</text>
    </g>
    <text
      x="112"
      y="402.500"
      fontFamily="'Liberation Mono', 'Noto Sans CJK SC', monospace"
      fontSize="7"
      fill="#222"
    >
      *前视
    </text>
  </Drawing>
);

const BigRibbonTool = ({ tool }) => (
  <BigTool $width={tool.width} disabled={tool.disabled}>
    <Icon name={tool.icon} size={11} />
    {tool.lines.map((line) => (
      <span key={line}>{line}</span>
    ))}
    {tool.caret && <Caret $light={tool.disabled} />}
  </BigTool>
);

const App = () => {
  const [commandTab, setCommandTab] = useState("特征");
  const [modelTab, setModelTab] = useState("模型");
  const [search, setSearch] = useState("");
  const [filter, setFilter] = useState("");

  return (
    <Page>
      <GlobalStyle />
      <TitleBar>
        <Logo>
          <Icon name="ds" size={11} />
          <span>
            <b>SOLID</b>WORKS
          </span>
        </Logo>
        <Menus>
          {menus.map((menu) => (
            <MenuButton key={menu}>{menu}</MenuButton>
          ))}
          <MenuButton aria-label="固定">
            <Icon name="pin" size={7} />
          </MenuButton>
        </Menus>
        <QuickTools>
          {quickTools.map((tool) => (
            <QuickButton
              key={tool.icon}
              $caret={tool.caret}
              disabled={tool.disabled}
              aria-label={tool.label}
            >
              <QuickFace $active={tool.active}>
                <Icon name={tool.icon} />
              </QuickFace>
              {tool.caret && <Caret />}
            </QuickButton>
          ))}
        </QuickTools>
        <DocName>草图1 ← 海...</DocName>
        <SearchBox>
          <Icon name="console" size={8} />
          <SearchInput
            aria-label="搜索命令"
            placeholder="搜索命令"
            value={search}
            onChange={(e) => setSearch(e.target.value)}
          />
          <Icon name="search" size={8} />
          <Caret $light />
        </SearchBox>
        <WindowButtons>
          {["user", "help", "min", "restore", "close"].map((name) => (
            <WindowButton key={name} aria-label={name}>
              <Icon name={name} size={name === "user" || name === "help" ? 9 : 8} />
            </WindowButton>
          ))}
        </WindowButtons>
      </TitleBar>

      <Ribbon>
        {ribbon.map((group, i) => (
          <RibbonGroup key={i} $last={i === ribbon.length - 1}>
            {group.big.map((tool) => (
              <BigRibbonTool key={tool.lines.join("")} tool={tool} />
            ))}
            {group.small.map((column, j) => (
              <SmallTools key={j} $width={column.width}>
                {column.tools.map((tool) => (
                  <SmallTool key={tool.text} disabled={tool.disabled}>
                    <Icon name={tool.icon} />
                    {tool.text}
                  </SmallTool>
                ))}
              </SmallTools>
            ))}
          </RibbonGroup>
        ))}
        <RibbonEnd>
          <button aria-label="折叠">
            <Icon name="up" size={8} />
          </button>
        </RibbonEnd>
      </Ribbon>

      <TabRow>
        {commandTabs.map((tab) => (
          <CommandTab
            key={tab}
            $wide={/^[A-Z]/.test(tab)}
            $active={tab === commandTab}
            onClick={() => setCommandTab(tab)}
          >
            {tab}
          </CommandTab>
        ))}
        <DocButtons>
          {["paneLeft", "paneRight", "min", "restore", "close"].map((name) => (
            <DocButton key={name} aria-label={name}>
              <Icon name={name} size={8} />
            </DocButton>
          ))}
        </DocButtons>
      </TabRow>

      <Body>
        <SidePanel>
          <Grip>
            <GripDot />
          </Grip>
          <PanelTabs>
            <PanelTab $active aria-label="设计树">
              <Icon name="part" />
            </PanelTab>
            <PanelTab aria-label="属性">
              <Icon name="config" />
            </PanelTab>
            <PanelTab aria-label="尺寸">
              <Icon name="target" />
            </PanelTab>
            <PanelTab aria-label="外观">
              <Icon name="ball" />
            </PanelTab>
            <PanelTab aria-label="加工">
              <Icon name="camTree" />
            </PanelTab>
            <PanelTab $narrow aria-label="工序">
              <Icon name="sheet" />
            </PanelTab>
            <PanelTab $narrow $active aria-label="更多">
              <Icon name="right" size={7} />
            </PanelTab>
          </PanelTabs>
          <FilterRow>
            <Icon name="funnel" size={11} />
            <FilterInput
              aria-label="过滤"
              value={filter}
              onChange={(e) => setFilter(e.target.value)}
            />
          </FilterRow>
          <Tree>
            <TreeRoot>
              <Icon name="part" />
              <span>海豚机械臂侧视图 (默认&lt;&lt;默认</span>
            </TreeRoot>
            {treeGroups.map((group, i) => (
              <TreeList key={i}>
                {group.map((item) => (
                  <TreeItem key={item.text}>
                    <Expander aria-label="展开" disabled={!item.open}>
                      {item.open && <Icon name="branch" size={5} />}
                    </Expander>
                    <Icon name={item.icon} />
                    {item.text}
                  </TreeItem>
                ))}
              </TreeList>
            ))}
          </Tree>
          <PanelFill />
          <ScrollTrack>
            <ScrollThumb />
          </ScrollTrack>
          <CollapseHandle aria-label="收起">
            <GripDot />
          </CollapseHandle>
        </SidePanel>

        <Viewport>
          <Sketch />
          <HudBar>
            {hudTools.map((tool) => (
              <HudButton key={tool.label} $caret={tool.caret} aria-label={tool.label}>
                <Icon name={tool.icon} />
                {tool.caret && <Caret $light />}
              </HudButton>
            ))}
          </HudBar>
          <ConfirmCorner aria-label="退出草图">
            <svg width="40" height="38" viewBox="0 0 40 38">
              <path d="M2 4h12l3 4v10H6L2 14z" fill="none" stroke="#9fa7bd" strokeWidth=".8" />
              <path d="M12 18l6-5v3c3 0 5 1 6 4-2-1-4-1-6-1v4z" fill="#7fb4d4" stroke="#6495b5" strokeWidth=".7" />
              <path d="M26 22c4 3 8 8 12 13M38 22c-5 3-9 8-12 12" fill="none" stroke="#cf6f65" strokeWidth="2" />
            </svg>
          </ConfirmCorner>
          <TaskPane>
            {paneTools.map((tool) => (
              <PaneButton key={tool.label} aria-label={tool.label}>
                <Icon name={tool.icon} />
              </PaneButton>
            ))}
          </TaskPane>
        </Viewport>
      </Body>

      <ModelTabs>
        <Arrows>
          {["first", "back", "next", "last"].map((name) => (
            <ArrowButton key={name} aria-label={name}>
              <Icon name={name === "last" ? "next" : name} size={5} />
            </ArrowButton>
          ))}
        </Arrows>
        {["模型", "3D 视图", "运动算例 1"].map((tab) => (
          <ModelTab key={tab} $active={tab === modelTab} onClick={() => setModelTab(tab)}>
            {tab}
          </ModelTab>
        ))}
      </ModelTabs>

      <StatusBar>
        <Product>SOLIDWORKS Premium 2021 SP3.0</Product>
        <StatusCell $width={47}>136.04mm</StatusCell>
        <StatusCell $width={43}>199.28mm</StatusCell>
        <StatusCell $width={82}>0mm 完全定义</StatusCell>
        <StatusCell $width={47}>
          自定义 <span>-</span>
          <Icon name="tag" size={8} />
        </StatusCell>
      </StatusBar>

      <Taskbar>
        <Weather aria-label="天气">
          <Icon name="cloud" size={16} />
        </Weather>
        <Apps>
          {apps.map((app) => (
            <AppButton
              key={app.icon}
              $open={app.open}
              $current={app.current}
              aria-label={app.label}
            >
              <AppFace $current={app.current}>
                <Icon name={app.icon} size={14} />
              </AppFace>
            </AppButton>
          ))}
        </Apps>
        <Tray>
          <TrayButton $width={17} aria-label="隐藏的图标">
            <Icon name="up" size={8} />
          </TrayButton>
          <TrayButton $width={18} aria-label="微信">
            <Icon name="wechat" size={9} />
          </TrayButton>
          <TrayButton $width={18} aria-label="助手">
            <Icon name="qq" size={9} />
          </TrayButton>
          <TrayButton $width={18}>中</TrayButton>
          <TrayButton $width={14} aria-label="网络">
            <Icon name="wifi" size={9} />
          </TrayButton>
          <TrayButton $width={13} aria-label="音量">
            <Icon name="sound" size={9} />
          </TrayButton>
          <TrayButton $width={14} aria-label="电池">
            <Icon name="battery" size={10} />
          </TrayButton>
          <Clock>
            13:47
            <br />
            2024/5/22
          </Clock>
          <TrayButton $width={17} aria-label="通知">
            <Icon name="bell" size={10} />
          </TrayButton>
        </Tray>
      </Taskbar>
    </Page>
  );
};

export default App;
